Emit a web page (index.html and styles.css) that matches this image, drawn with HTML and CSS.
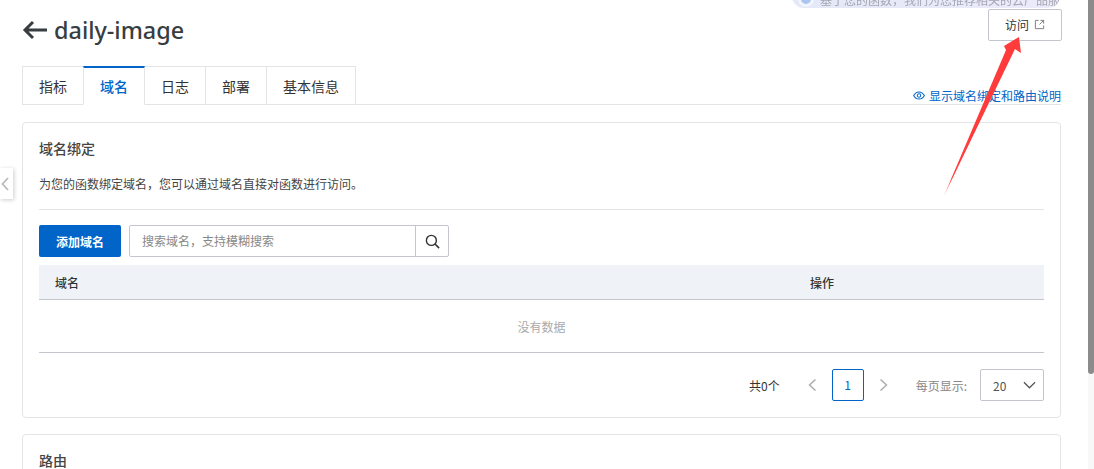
FILE: index.html
```html
<!DOCTYPE html>
<html lang="zh-CN">
<head>
<meta charset="utf-8">
<title>daily-image</title>
<link rel="stylesheet" href="styles.css">
</head>
<body>
<main class="page">
  <div class="assistant-pill"><span class="assistant-dot"></span><span class="assistant-text">基于您的函数，我们为您推荐相关的云产品服务</span></div>
  <header class="head">
    <div class="title-wrap">
      <svg class="back" viewBox="0 0 26 20" width="26" height="20"><path d="M25 10H3M11 2l-8 8 8 8" fill="none" stroke="#373d41" stroke-width="3"/></svg>
      <h1 class="title">daily-image</h1>
    </div>
    <button class="visit">访问<svg class="ext" viewBox="0 0 12 12" width="11" height="11"><path d="M5 1.500H1.500v9h9V7M7 1.500h3.500V5M10.500 1.500 6 6" fill="none" stroke="#777" stroke-width="1"/></svg></button>
  </header>
  <nav class="tabs">
    <a class="tab">指标</a>
    <a class="tab active">域名</a>
    <a class="tab">日志</a>
    <a class="tab">部署</a>
    <a class="tab">基本信息</a>
    <a class="explain"><svg viewBox="0 0 14 10" width="12" height="9"><path d="M.7 5C2.500 2 4.600.8 7 .8S11.500 2 13.300 5C11.500 8 9.400 9.200 7 9.200S2.500 8 .7 5Z" fill="none" stroke="#0064c8" stroke-width="1.200"/><circle cx="7" cy="5" r="2" fill="none" stroke="#0064c8" stroke-width="1.200"/></svg>显示域名绑定和路由说明</a>
  </nav>
  <section class="card">
    <h2 class="card-title">域名绑定</h2>
    <p class="desc">为您的函数绑定域名，您可以通过域名直接对函数进行访问。</p>
    <div class="toolbar">
      <button class="primary">添加域名</button>
      <div class="search">
        <span class="search-input">搜索域名，支持模糊搜索</span>
        <span class="search-btn"><svg viewBox="0 0 16 16" width="15" height="15"><circle cx="6.800" cy="6.800" r="5.300" fill="none" stroke="#333" stroke-width="1.500"/><path d="m10.700 10.700 4.300 4.300" stroke="#333" stroke-width="1.700"/></svg></span>
      </div>
    </div>
    <div class="table-head"><span class="col-name">域名</span><span class="col-op">操作</span></div>
    <div class="empty">没有数据</div>
    <div class="pager">
      <span class="total">共0个</span>
      <svg class="chev" viewBox="0 0 10 14" width="10" height="14"><path d="M8.500 1.500 2.500 7l6 5.500" fill="none" stroke="#aaa" stroke-width="1.400"/></svg>
      <span class="page-num">1</span>
      <svg class="chev" viewBox="0 0 10 14" width="10" height="14"><path d="M1.500 1.500 7.500 7l-6 5.500" fill="none" stroke="#aaa" stroke-width="1.400"/></svg>
      <span class="per">每页显示:</span>
      <span class="size">20<svg viewBox="0 0 14 8" width="13" height="8"><path d="m1 1 6 6 6-6" fill="none" stroke="#555" stroke-width="1.300"/></svg></span>
    </div>
  </section>
  <section class="card card-second">
    <h2 class="card-title">路由</h2>
  </section>
  <div class="side-toggle"><svg viewBox="0 0 8 14" width="8" height="14"><path d="M7 1 1.500 7 7 13" fill="none" stroke="#bbb" stroke-width="1.800"/></svg></div>
  <svg class="annot" viewBox="0 0 90 170" width="90" height="170"><defs><linearGradient id="arrow-fade" x1="0" y1="1" x2="0" y2="0"><stop offset="0" stop-color="#ff3b3b" stop-opacity=".25"/><stop offset=".12" stop-color="#ff3b3b"/></linearGradient></defs><path d="M3 164 66 16 64 12 79 3 81 19 75 15Z" fill="url(#arrow-fade)"/></svg>
</main>
<div class="scrollbar"><div class="thumb"></div></div>
</body>
</html>
```
FILE: styles.css
```css
* { box-sizing: border-box; }
html, body { margin: 0; height: 100%; overflow: hidden; }
body {
  display: flex;
  background: #fff;
  color: #333;
  font-family: "Noto Sans CJK SC", "Noto Sans", Roboto, sans-serif;
  font-size: 12px;
}
.page { position: relative; flex: 1; min-width: 0; padding: 10px 27px 0 22px; overflow: hidden; }
.assistant-pill {
  position: absolute; left: 792px; top: -10px; width: 268px; height: 18px;
  border-radius: 0 0 12px 12px;
  background: linear-gradient(90deg, #e4e8f8, #ebebfa);
  padding: 0 0 0 6px; display: flex; align-items: center; gap: 6px; overflow: hidden;
}
.assistant-dot { width: 16px; height: 16px; border-radius: 50%; background: #a9c5f0; border: 3px solid #f2f4fc; flex: none; }
.assistant-text { font-size: 12px; color: #a5a6b2; white-space: nowrap; filter: blur(.5px); }
.head { display: flex; justify-content: space-between; align-items: flex-start; height: 56px; }
.title-wrap { display: flex; align-items: center; gap: 6px; height: 40px; }
.back { display: block; }
.title { margin: 0; font: 500 23.4px/40px "Noto Sans", sans-serif; color: #373d41; }
.visit {
  display: flex; align-items: center; justify-content: center; gap: 5px;
  width: 74px; height: 32px; margin: -1px -1px 0 0; padding: 0 0 2px; background: #fff; border: 1px solid #c4c6cf; border-radius: 2px;
  font: inherit; color: #333;
}
.tabs { position: relative; display: flex; height: 39px; border-bottom: 1px solid #e3e4e6; }
.tab {
  display: flex; align-items: center; justify-content: center; padding: 0 16px;
  height: 39px; margin-left: -1px; border: 1px solid #e3e4e6; background: #fff; font-size: 14px; color: #333;
}
.tab:first-child { margin-left: 0; }
.tab.active { color: #0064c8; font-weight: 500; border-top: 2px solid #0064c8; border-bottom-color: #fff; position: relative; }
.explain { margin-left: auto; align-self: flex-end; display: flex; align-items: center; gap: 4px; height: 17px; color: #0064c8; white-space: nowrap; }
.card { margin-top: 17px; height: 296px; padding: 0 16px; border: 1px solid #e3e4e6; border-radius: 4px; background: #fff; }
.card-second { height: 60px; margin-top: 16px; }
.card-title { margin: 0; padding-top: 15px; font-size: 14px; font-weight: 500; line-height: 21px; color: #444; }
.desc { margin: 16px 0 0; padding-bottom: 16px; line-height: 18px; border-bottom: 1px solid #e3e4e6; color: #444; }
.toolbar { display: flex; gap: 8px; margin-top: 15px; }
.primary { width: 82px; height: 32px; border: 0; border-radius: 2px; background: #0064c8; color: #fff; font: 700 12px "Noto Sans CJK SC", sans-serif; }
.search { display: flex; width: 320px; height: 32px; border: 1px solid #c4c6cf; border-radius: 2px; }
.search-input { flex: 1; padding-left: 12px; line-height: 30px; color: #888; }
.search-btn { width: 33px; display: flex; align-items: center; justify-content: center; border-left: 1px solid #c4c6cf; }
.table-head { position: relative; display: flex; align-items: center; height: 35px; margin-top: 8px; background: #eff3f8; border-bottom: 1px solid #c4c6cf; font-weight: 500; }
.col-name { margin-left: 16px; }
.col-op { position: absolute; left: 771px; }
.empty { height: 53px; line-height: 53px; text-align: center; color: #aaa; border-bottom: 1px solid #c4c6cf; }
.pager { display: flex; align-items: center; justify-content: flex-end; height: 32px; margin-top: 16px; }
.total { margin-right: 27px; }
.page-num { width: 32px; height: 32px; margin: 0 15px; border: 1px solid #0064c8; border-radius: 2px; line-height: 30px; text-align: center; color: #0064c8; }
.per { margin-left: 27px; margin-right: 13px; color: #888; }
.size { display: flex; align-items: center; justify-content: space-between; width: 64px; height: 32px; padding: 0 7px 0 12px; border: 1px solid #c4c6cf; border-radius: 2px; color: #555; }
.side-toggle { position: absolute; left: 0; top: 168px; width: 13px; height: 31px; padding-left: 1px; background: #fff; display: flex; align-items: center; box-shadow: 1px 1px 4px rgba(0,0,0,.2); }
.annot { position: absolute; left: 940px; top: 34px; pointer-events: none; }
.scrollbar { flex: none; width: 6px; height: 100%; background: #f8f8f8; }
.thumb { height: 374px; background: #8b8b8b; border-radius: 0 0 3px 3px; }
```
